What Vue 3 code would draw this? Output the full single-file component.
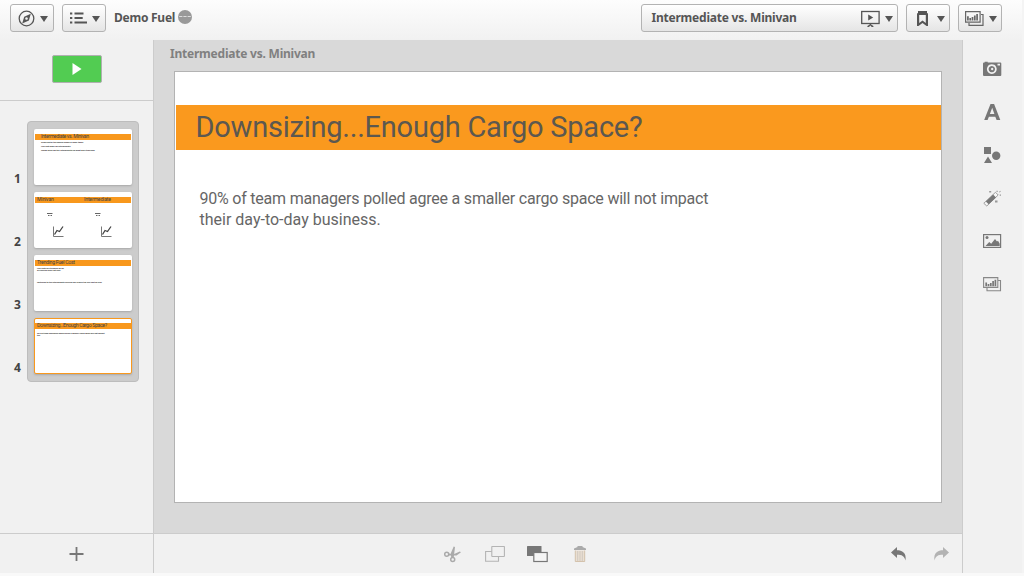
<script setup>
const slides = [
  { title: 'Intermediate vs. Minivan', cls: 'first', lines: ['Gross cost of the smaller model is lower today', 'Fuel cost lower for intermediate', 'Teams could use the intermediate for most daily trips now'] },
  { title: 'Minivan', second: 'Intermediate', cls: 'charts', lines: [] },
  { title: 'Trending Fuel Cost', cls: 'trend', lines: ['Fuel costs are trending up for', 'all vehicles since last year', 'Switching to the intermediate vehicles will reduce the fuel cost by year'] },
  { title: 'Downsizing...Enough Cargo Space?', cls: 'current', lines: ['90% of team managers polled agree a smaller cargo space will not impact', 'the'] },
]
</script>

<template>
  <div class="app">
    <header class="topbar">
      <button class="btn small">
        <svg width="17" height="17" viewBox="0 0 17 17"><circle cx="8.5" cy="8.5" r="7.3" fill="none" stroke="#555" stroke-width="1.3" /><path fill-rule="evenodd" d="M12.8 3.7 10.9 10.4 4.2 13.4 6.2 6.7Z M8.5 7.2a1.3 1.3 0 1 0 .01 0Z" fill="#555" /></svg>
        <i class="caret" />
      </button>
      <button class="btn small second">
        <svg width="17" height="12" viewBox="0 0 17 12"><path d="M0 1.5h2.3M0 6h2.3M0 10.5h2.3" stroke="#555" stroke-width="2" /><path d="M4.5 1.5H13.5M4.5 6h8.2M4.5 10.5H17" stroke="#555" stroke-width="1.9" /></svg>
        <i class="caret" />
      </button>
      <span class="appname">Demo Fuel</span>
      <svg class="dots" width="14" height="14" viewBox="0 0 14 14"><circle cx="7" cy="7" r="7" fill="#999" /><path d="M1.2 6.5h3.2M5.4 6.5h3.2M9.6 6.5h3.2" stroke="#ddd" stroke-width="1" /></svg>
      <div class="spacer" />
      <button class="btn story">
        <span class="storyname">Intermediate vs. Minivan</span>
        <svg width="19" height="17" viewBox="0 0 19 17"><rect x=".7" y="1.5" width="17.4" height="12" fill="none" stroke="#555" stroke-width="1.3" /><path d="m7.2 4.5 5 3-5 3Z M8.7 13h1.4v1.5l2.3 1.5v1h-1.7L9.4 15.5 8 17H6.4v-1l2.3-1.5Z" fill="#555" /></svg>
        <i class="caret" />
      </button>
      <button class="btn small mark">
        <svg width="11" height="15" viewBox="0 0 11 15"><path fill-rule="evenodd" d="M1 0h9v2l1 .5V15H9.5L5.5 12 1.5 15H0V2.5L1 2Z M2.2 4v8l3.3-2.6L8.8 12V4Z" fill="#555" /></svg>
        <i class="caret" />
      </button>
      <button class="btn small sheets">
        <svg width="19" height="15" viewBox="0 0 19 15"><path d="M16 3.5h2v10.8H4V12M.6.6h14.5v10.5H.6Z" fill="none" stroke="#666" stroke-width="1.2" /><path d="M2.9 5.3v4.3M5.2 7v2.6M7.5 6v3.6M9.8 4.5v5.1M12.1 3v6.6" stroke="#666" stroke-width="1.7" /></svg>
        <i class="caret" />
      </button>
    </header>

    <main class="body">
      <aside class="left">
        <div class="playbox"><button class="play"><svg width="10" height="12" viewBox="0 0 10 12"><path d="M.5 0 9.5 6 .5 12Z" fill="#fff" /></svg></button></div>
        <div class="slides">
          <div class="nums"><span v-for="(s, i) in slides" :key="i">{{ i + 1 }}</span></div>
          <div class="strip">
            <div v-for="s in slides" :key="s.title" class="thumb" :class="s.cls">
              <div class="band"><span>{{ s.title }}</span><span v-if="s.second" class="two">{{ s.second }}</span></div>
              <div v-if="s.lines.length" class="lines"><p v-for="l in s.lines" :key="l">{{ l }}</p></div>
              <div v-else class="minis">
                <div v-for="n in 2" :key="n" class="mini">
                  <svg width="28" height="25" viewBox="0 0 28 25"><path d="M0 .5h5.5M1 2.5h1.5M3.5 2.5h1.5" stroke="#666" stroke-width="1.1" /><path d="M6.5 13.5v10H16.5" fill="none" stroke="#777" stroke-width="1" /><path d="m7.5 21.5 2.5-4 2.5 1 3.5-5" fill="none" stroke="#444" stroke-width="1.3" /></svg>
                </div>
              </div>
            </div>
          </div>
        </div>
      </aside>

      <section class="canvas">
        <h2>Intermediate vs. Minivan</h2>
        <div class="slide">
          <h1>Downsizing...Enough Cargo Space?</h1>
          <p><span class="l1">90% of team managers polled agree a smaller cargo space will not impact</span><br><span class="l2">their day-to-day business.</span></p>
        </div>
      </section>

      <aside class="tools">
        <svg viewBox="0 0 20 20"><path fill-rule="evenodd" d="M2.7 3.5V2.7h3v.8H18.3q1 0 1 1V16q0 1-1 1H2q-1 0-1-1V4.5q0-1 1-1Z M9.8 5.2a4.9 4.9 0 1 0 .01 0Z M15.5 4.7v1.8H18V4.7Z" fill="#777" /><path fill-rule="evenodd" d="M9.8 6.9a3.2 3.2 0 1 0 .01 0Z M10.2 8.8a1.2 1.2 0 1 1-.01 0Z" fill="#777" /></svg>
        <svg viewBox="0 0 20 20"><path fill-rule="evenodd" d="M8.5 4h3.6L18.3 20h-3.7l-1.3-3.3H6.9L5.6 20H2.2Z M10.2 7.7 7.9 13.9h4.5Z" fill="#777" transform="translate(0 -2)" /></svg>
        <svg viewBox="0 0 20 20"><path d="M2 2h7v7H2Z M6 11.5 10 18H2Z" fill="#777" /><circle cx="14.2" cy="10.8" r="4.2" fill="#777" /></svg>
        <svg viewBox="0 0 20 20"><path d="m1.8 15.3 11.7-11 2.7 2.7L4.8 18Z" fill="#f6f6f6" stroke="#888" stroke-width=".8" /><path d="m3.8 13.4 7.3-6.9 2.9 2.9-7.3 6.9Z" fill="#777" /><path d="M7.2 3h2v1.5h-2Z M13 12.5h2.5v2H13Z M14.5 2.7h1.2v1.2h-1.2Z M17.7 6.5H19v1.2h-1.3Z M17 4l1.2-1.2.6.6L17.6 4.6Z" fill="#999" /></svg>
        <svg viewBox="0 0 20 20"><rect x="1.6" y="3.6" width="17" height="12.8" fill="none" stroke="#777" stroke-width="1.2" /><path d="m3.5 15 3.7-4 2 1.8L13 8l2 2.5 1-.8 1.7 3V15Z" fill="#777" /><circle cx="5" cy="6.6" r="1.5" fill="#777" /></svg>
        <svg viewBox="0 0 20 20"><path d="M16 6.5h2.5v10.3H5V14M1.6 3.6h14.2v9.8H1.6Z" fill="none" stroke="#888" stroke-width="1.1" /><path d="M4.2 8.5v3.7M6.5 10v2.2M8.8 9v3.2M11.1 7v5.2M13.4 5.8v6.4" stroke="#777" stroke-width="1.7" /></svg>
      </aside>

      <div class="add"><svg width="15" height="15" viewBox="0 0 15 15"><path d="M7.5 0v14M.5 7h14" stroke="#777" stroke-width="1.8" /></svg></div>
      <div class="actions">
        <svg class="cut" width="17" height="17" viewBox="0 0 17 17"><g fill="none" stroke="#aaa" stroke-width="1.5"><circle cx="2.7" cy="8.2" r="2" /><circle cx="8.7" cy="13.4" r="2" /></g><path d="M4.2 7.2 9 8.4 15.8 5.4 17 6.2 12.5 9.4 4 9.6Z M7.3 12 6.7 7.5 9.7.5 11 1 10.2 7.7 9.7 12Z" fill="#aaa" /></svg>
        <svg class="front" width="20" height="17" viewBox="0 0 20 17"><path d="M7 5.5H.6v9.8h12.9v-4.8" fill="none" stroke="#b4b4b4" stroke-width="1.1" /><rect x="6.8" y=".5" width="12.6" height="10" rx=".5" fill="#f1f1f1" stroke="#b4b4b4" stroke-width="1.1" /></svg>
        <svg class="back" width="21" height="17" viewBox="0 0 21 17"><rect width="14.5" height="10" rx=".5" fill="#777" /><rect x="6.8" y="6.5" width="13.4" height="9" fill="#f5f5f5" stroke="#777" stroke-width="1.2" /></svg>
        <svg class="trash" width="12" height="17" viewBox="0 0 12 17"><path d="M0 4V2.5L3.5 1V0h5v1L12 2.5V4Z" fill="#aaa" /><path d="M1.3 4.5v11h9.4v-11" fill="#eadfd2" stroke="#d0bda6" stroke-width=".9" /><path d="M3.7 5v10M6 5v10M8.3 5v10" stroke="#d0c9c0" stroke-width="1" /></svg>
        <div class="spacer" />
        <svg class="undo" width="16" height="14" viewBox="0 0 16 14"><path d="M0 5.5 6 0v3.3C11 3.3 15.7 5.7 14.5 13.5 13.3 9 11 7.8 6 7.8V11Z" fill="#777" /></svg>
        <svg class="redo" width="16" height="14" viewBox="0 0 16 14"><path d="M16 5.5 10 0v3.3C5 3.3.3 5.7 1.5 13.5 2.7 9 5 7.8 10 7.8V11Z" fill="#b3b3b3" /></svg>
      </div>
    </main>
  </div>
</template>

<style>
body { margin: 0; background: #f9f9f9; overflow: hidden; }
</style>

<style scoped>
* { box-sizing: border-box; }
svg { display: block; flex: none; }
.app { width: 1022px; height: 573px; background: #f1f1f1; font-family: "Noto Sans", "Open Sans", sans-serif; color: #555; display: flex; flex-direction: column; box-shadow: 2px 0 #f4f4f4; }
.topbar { height: 40px; flex: none; display: flex; align-items: flex-start; padding: 4px 20px 0 10px; background: linear-gradient(#fdfdfd, #f1f1f1); }
.btn { height: 28px; border: 1px solid #b3b3b3; border-radius: 3px; background: linear-gradient(#fff, #e5e5e5); display: flex; align-items: center; justify-content: space-between; padding: 0 5px 0 7px; }
.small { width: 44px; }
.second { margin-left: 8px; }
.caret { border: 4px solid transparent; border-top: 6px solid #555; border-bottom: 0; margin-top: 1px; }
.appname { font: bold 12px/27px "Noto Sans", sans-serif; margin-left: 8px; width: 62px; letter-spacing: -.25px; white-space: nowrap; }
.dots { margin: 6px 0 0 2px; }
.spacer { flex: 1; }
.story { width: 257px; padding: 0 4px 0 9.5px; }
.storyname { font: bold 12px/17px "Noto Sans", sans-serif; flex: 1; text-align: left; color: #555; letter-spacing: -.22px; margin-top: -1px; }
.story svg { margin-right: 5px; }
.mark { margin-left: 8px; padding: 0 4.5px 0 10px; }
.sheets { margin-left: 8px; padding: 0 4.5px 0 6px; }
.body { height: 533px; display: grid; grid-template: 493px 40px / 153px 809px 60px; }
.left { min-width: 0; }
.playbox { height: 61px; border-bottom: 1px solid #ccc; padding: 15px 0 0 52px; }
.play { width: 50px; height: 28px; background: #52cc52; border: 1px solid #b0b0b0; border-radius: 2px; padding: 0 0 0 19px; display: flex; align-items: center; }
.slides { display: flex; padding-top: 20px; }
.nums { width: 27px; padding: 49px 0 0 14px; }
.nums span { display: block; height: 63px; font: bold 12px/17px "Noto Sans", sans-serif; color: #444; }
.strip { width: 112px; height: 261px; background: #ccc; border: 1px solid #bdbdbd; border-radius: 4px; padding: 7px 0 0 6px; display: flex; flex-direction: column; gap: 7px; }
.thumb { width: 98px; height: 56px; background: #fff; border-radius: 2px; box-shadow: 0 1px 2px #8888; padding: 5px 1px 0; overflow: hidden; flex: none; }
.band { height: 6px; background: #f8981d; font: 5.2px/5px Roboto, sans-serif; letter-spacing: -.2px; color: #444; padding-left: 2px; display: flex; white-space: nowrap; }
.trend .band { letter-spacing: -.3px; }
.first .band { letter-spacing: -.36px; }
.current .band { letter-spacing: -.36px; }
.first .band, .first .lines { padding-left: 6px; }
.charts .band span { width: 48px; }
.lines { padding: 1px 0 0 2px; }
.lines p { margin: 0; height: 4px; font: bold 2px/3px "Noto Sans", sans-serif; color: #333; white-space: nowrap; letter-spacing: -.08px; }
.trend .lines p { height: 2px; }
.trend .lines p:last-child { margin-top: 10px; }
.current { border: 1px solid #f8981d; padding: 4px 0 0; }
.current .lines { padding-top: 3px; }
.current .lines p { height: 2px; }
.minis { display: flex; padding: 10px 0 0 12px; }
.mini { width: 48px; flex: none; }
.canvas { background: #d9d9d9; border-left: 1px solid #ccc; padding: 5px 20px 0; }
h2 { margin: 0 0 9px -4px; font: bold 12px/17px "Noto Sans", sans-serif; color: #808080; letter-spacing: -.22px; }
.slide { width: 768px; height: 432px; background: #fff; border: 1px solid #b3b3b3; padding: 33px 0 0 1px; }
h1 { height: 45px; margin: 0; background: #fa991e; padding-left: 19.5px; font: 400 29px/45px Roboto, sans-serif; letter-spacing: -.23px; color: #5c5850; white-space: nowrap; }
.slide p { margin: 38px 0 0 23.5px; font: 400 16px/21px Roboto, sans-serif; color: #666; white-space: nowrap; }
.l1 { letter-spacing: -.215px; }
.l2 { letter-spacing: 0; }
.tools { grid-row: 1 / 3; grid-column: 3; border-left: 1px solid #ccc; padding: 19px 0 0 19px; display: flex; flex-direction: column; gap: 23px; }
.tools svg { width: 20px; height: 20px; }
.add { grid-column: 1; grid-row: 2; border-top: 1px solid #ccc; padding: 13px 0 0 69px; }
.actions { grid-column: 2; grid-row: 2; border-top: 1px solid #ccc; border-left: 1px solid #ccc; display: flex; padding: 12px 13.5px 0 290px; }
.front { margin-left: 24px; }
.back { margin-left: 22px; }
.trash { margin-left: 26px; }
.undo { margin-top: 1px; }
.redo { margin: 1px 0 0 26px; }
</style>
